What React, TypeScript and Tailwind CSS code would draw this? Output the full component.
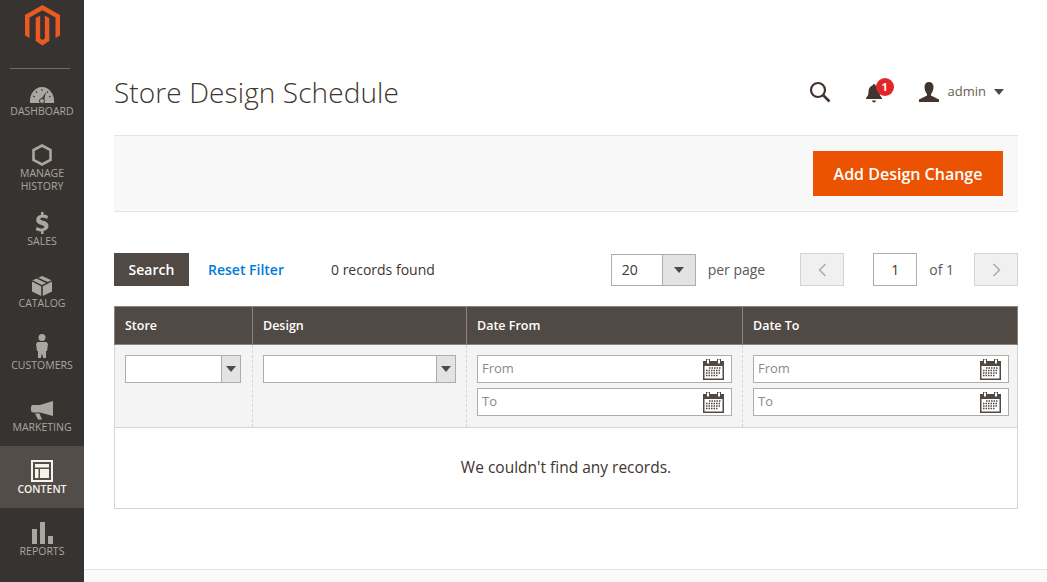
import type { ReactNode } from 'react'

const Gauge = () => (
  <svg width="26" height="18" viewBox="0 0 26 18" fill="none">
    <path d="M1 17 C0 8 6 1 13 1 C20 1 26 8 25 17 Z" fill="#aaa6a0" />
    <path d="M11 15 L17 6 L14.5 16 Z" fill="#373330" />
    <circle cx="13" cy="15" r="2.5" fill="#aaa6a0" stroke="#373330" />
    <path d="M13 3v2M7 5l1 2M19 5l-1 2M4 10l2 1M22 10l-2 1" stroke="#373330" />
  </svg>
)

const Hexagon = () => (
  <svg width="20" height="22" viewBox="0 0 20 22" fill="none">
    <path d="M10 1.5 L18.5 6 V16 L10 20.5 L1.5 16 V6 Z" stroke="#aaa6a0" strokeWidth="2.6" />
  </svg>
)

const Dollar = () => (
  <svg width="14" height="22" viewBox="0 0 14 22" fill="#aaa6a0">
    <path d="M6 0h2.5v2.6c1.8.2 3.4.7 4.6 1.4l-1 3c-1.400-.8-3-1.300-4.600-1.300-1.500 0-2.200.5-2.200 1.200 0 .8.900 1.200 3 1.900 3.300 1 5.200 2.300 5.200 5.100 0 2.600-1.800 4.500-5 5V22H6v-2.500c-2-.1-4-.7-5.300-1.500l1-3.100c1.500.9 3.300 1.500 5.100 1.500 1.500 0 2.500-.5 2.500-1.400 0-.8-.8-1.300-2.900-2C3.400 12 1.200 10.800 1.200 7.900c0-2.600 1.800-4.600 4.800-5.100z" />
  </svg>
)

const Box = () => (
  <svg width="20" height="20" viewBox="0 0 20 20" fill="#aaa6a0">
    <path d="M10 0 L19.500 4.200 L15.800 6.100 L6.400 1.700 Z" />
    <path d="M4.600 2.500 L14 6.900 L10 8.900 L0.500 4.200 Z" />
    <path d="M0 5.600 L9.200 10.200 V20 L0 15.500 Z" />
    <path d="M20 5.600 L10.800 10.200 V20 L20 15.500 Z" />
  </svg>
)

const Person = () => (
  <svg width="12" height="24" viewBox="0 0 12 24" fill="#aaa6a0">
    <circle cx="6" cy="3.500" r="3.500" />
    <path d="M1.500 8h9L12 10l-1 7h-1v7H7.200L6 19.500 4.800 24H2v-7H1L0 10z" />
  </svg>
)

const Megaphone = () => (
  <svg width="22" height="19" viewBox="0 0 22 19" fill="#aaa6a0">
    <path d="M22 0v15L9 11.500H2.500A2.500 2.500 0 0 1 0 9V6a2 2 0 0 1 2-2h7z" />
    <path d="M4 12.500h4.500l2.500 6H7z" />
  </svg>
)

const Layout = () => (
  <svg width="22" height="22" viewBox="0 0 22 22" fill="none">
    <rect x="1" y="1" width="20" height="20" stroke="#f7f3eb" strokeWidth="2" />
    <rect x="4" y="4" width="14" height="3.500" fill="#f7f3eb" />
    <rect x="4" y="9" width="3.500" height="9" fill="#f7f3eb" />
    <rect x="9" y="9" width="9" height="9" fill="#f7f3eb" />
  </svg>
)

const Bars = () => (
  <svg width="21" height="22" viewBox="0 0 21 22" fill="#aaa6a0">
    <rect x="0" y="7" width="5" height="15" />
    <rect x="8" y="0" width="5" height="22" />
    <rect x="16" y="14" width="5" height="8" />
  </svg>
)

const Logo = () => (
  <svg width="35" height="41" viewBox="0 0 35 41" fill="#eb5a24">
    <path d="M17.500 0 L35 10 V30.500 L30.500 33 V12.600 L17.500 5.200 L4.500 12.600 V33 L0 30.500 V10 Z" />
    <path d="M15.200 10.500 V33.500 L17.500 35 L19.800 33.500 V10.500 L24.300 13.100 V36 L17.500 40.500 L10.700 36 V13.100 Z" />
  </svg>
)

const Calendar = () => (
  <svg width="21" height="21" viewBox="0 0 21 21">
    <rect x="0" y="2" width="21" height="19" fill="#514943" />
    <rect x="1.500" y="7" width="18" height="12.500" fill="#fff" />
    <rect x="3.500" y="0" width="3" height="5" fill="#fff" stroke="#514943" />
    <rect x="14.500" y="0" width="3" height="5" fill="#fff" stroke="#514943" />
    <path d="M6 9h12M3 11.500h15M3 14h15M3 16.500h12" stroke="#514943" strokeWidth="1.500" strokeDasharray="1.500 1" />
  </svg>
)

const Caret = ({ className = '' }: { className?: string }) => (
  <span className={`inline-block w-0 h-0 border-x-[5px] border-x-transparent border-t-[6px] border-t-[#514943] ${className}`} />
)

function NavItem({ icon, label, active, tall }: { icon: ReactNode; label: ReactNode; active?: boolean; tall?: boolean }) {
  return (
    <div className={`flex flex-col items-center ${tall ? 'h-[68px]' : 'h-[62px]'} ${active ? 'bg-[#524d49] text-[#f7f3eb] font-semibold' : 'text-[#aaa6a0]'}`}>
      <div className="h-[36px] flex items-end justify-center shrink-0">{icon}</div>
      <div className="mt-[1px] text-[10.500px] leading-[13px] text-center">{label}</div>
    </div>
  )
}

function SelectBox({ className }: { className: string }) {
  return (
    <div className={`h-[28px] flex bg-white border border-[#adadad] ${className}`}>
      <div className="flex-1" />
      <div className="w-[19px] bg-[#e3e3e3] border-l border-[#adadad] flex items-center justify-center">
        <Caret className="border-x-[4px] border-t-[5px]" />
      </div>
    </div>
  )
}

function DateInput({ placeholder }: { placeholder: string }) {
  return (
    <div className="h-[28px] flex items-center justify-between bg-white border border-[#adadad] pl-[4px] pr-[7px] text-[13px] text-[#8a8a8a]">
      <span>{placeholder}</span>
      <Calendar />
    </div>
  )
}

export default function App() {
  return (
    <div className="flex w-[1047px] h-[582px] overflow-hidden bg-white font-['Open_Sans',sans-serif] text-[#41362f]">
      <aside className="w-[84px] shrink-0 bg-[#373330]">
        <div className="h-[68px] border-b-0 flex justify-center pt-[5px]">
          <Logo />
        </div>
        <div className="mx-[10px] w-[60px] h-px bg-[#736e69]" />
        <div className="-mt-px">
          <NavItem icon={<Gauge />} label="DASHBOARD" />
          <NavItem icon={<Hexagon />} label={<>MANAGE<br />HISTORY</>} tall />
          <NavItem icon={<Dollar />} label="SALES" />
          <NavItem icon={<Box />} label="CATALOG" />
          <NavItem icon={<Person />} label="CUSTOMERS" />
          <NavItem icon={<Megaphone />} label="MARKETING" />
          <NavItem icon={<Layout />} label="CONTENT" active />
          <NavItem icon={<Bars />} label="REPORTS" />
        </div>
      </aside>

      <main className="flex-1 flex flex-col min-w-0">
        <div className="flex-1 pl-[30px] pr-[29px]">
          <div className="h-[135px] flex items-center justify-between pt-[48px]">
            <h1 className="text-[28px] font-light leading-[36px] tracking-[0.1px]">Store Design Schedule</h1>
            <div className="flex items-center pr-[14px]">
              <svg width="22" height="22" viewBox="0 0 22 22" fill="none" stroke="#41362f" strokeWidth="2.200" className="mr-[34px]">
                <circle cx="9" cy="9" r="7" />
                <path d="M14 14l6.500 6.500" strokeWidth="2.600" />
              </svg>
              <div className="relative mr-[26px] w-[28px] h-[22px]">
                <svg width="18" height="19" viewBox="0 0 18 19" fill="#41362f" className="absolute left-0 top-[3px]">
                  <path d="M9 0a1.500 1.500 0 0 1 1.500 1.500C13.500 2.300 14.500 5 14.500 8c0 3 1 4.500 2.500 6v1H1v-1c1.500-1.500 2.500-3 2.500-6 0-3 1-5.700 4-6.500A1.500 1.500 0 0 1 9 0zM7 16.500h4a2 2 0 0 1-4 0z" />
                </svg>
                <span className="absolute left-[11px] top-[-3px] w-[18px] h-[18px] rounded-full bg-[#e22626] text-white text-[11px] font-bold leading-[18px] text-center">1</span>
              </div>
              <svg width="20" height="20" viewBox="0 0 20 20" fill="#41362f" className="mr-[9px]">
                <path d="M10 0c3 0 4.500 2 4.500 5s-1.500 6-2.500 7v1.500l8 4V20H0v-2.500l8-4V12c-1-1-2.500-4-2.500-7S7 0 10 0z" />
              </svg>
              <span className="text-[13px] text-[#676056] mr-[8px]">admin</span>
              <Caret className="border-x-[4.500px] border-t-[5px]" />
            </div>
          </div>

          <div className="h-[77px] bg-[#f8f8f8] border-y border-[#e3e3e3] flex items-center justify-end pr-[15px]">
            <button className="w-[190px] h-[45px] bg-[#eb5202] text-white text-[16px] font-semibold">Add Design Change</button>
          </div>

          <div className="mt-[41px] h-[33px] flex items-center text-[14px]">
            <button className="w-[75px] h-[33px] bg-[#514943] text-white font-semibold">Search</button>
            <span className="ml-[19px] text-[#007bdb] font-semibold text-[14px]">Reset Filter</span>
            <span className="ml-[47px] text-[#41362f]">0 records found</span>
            <div className="ml-auto flex items-center">
              <div className="w-[85px] h-[32px] flex border border-[#adadad] bg-white">
                <span className="flex-1 pl-[10px] leading-[30px]">20</span>
                <span className="w-[33px] bg-[#e3e3e3] border-l border-[#adadad] flex items-center justify-center">
                  <Caret className="border-x-[4px] border-t-[5px]" />
                </span>
              </div>
              <span className="ml-[12px] text-[#5e5751]">per page</span>
              <div className="ml-[35px] w-[44px] h-[33px] bg-[#f0f0f0] border border-[#d4d4d4] flex items-center justify-center">
                <svg width="9" height="14" viewBox="0 0 9 14" fill="none" stroke="#a8a8a8" strokeWidth="1.400"><path d="M7.500 1 L1.500 7 L7.500 13" /></svg>
              </div>
              <div className="ml-[29px] w-[44px] h-[33px] bg-white border border-[#adadad] flex items-center justify-center">1</div>
              <span className="ml-[12px] text-[#5e5751]">of 1</span>
              <div className="ml-[20px] w-[44px] h-[33px] bg-[#f0f0f0] border border-[#d4d4d4] flex items-center justify-center">
                <svg width="9" height="14" viewBox="0 0 9 14" fill="none" stroke="#a8a8a8" strokeWidth="1.400"><path d="M1.500 1 L7.500 7 L1.500 13" /></svg>
              </div>
            </div>
          </div>

          <div className="mt-[20px]">
            <div className="grid grid-cols-[137px_214px_276px_277px] h-[39px] bg-[#514943] border border-[#8a837f] text-white text-[12.500px] font-semibold leading-[37px]">
              <div className="pl-[10px]">Store</div>
              <div className="pl-[10px] border-l border-[#8a837f]">Design</div>
              <div className="pl-[10px] border-l border-[#8a837f]">Date From</div>
              <div className="pl-[10px] border-l border-[#8a837f]">Date To</div>
            </div>
            <div className="grid grid-cols-[137px_214px_276px_277px] h-[82px] bg-[#f4f4f4] border-x border-[#d6d6d6]">
              <div className="pl-[10px] pt-[10px]">
                <SelectBox className="w-[116px]" />
              </div>
              <div className="pl-[10px] pt-[10px] border-l border-dashed border-[#d6d6d6]">
                <SelectBox className="w-[193px]" />
              </div>
              <div className="pl-[10px] pt-[10px] pr-[10px] border-l border-dashed border-[#d6d6d6] flex flex-col gap-[5px]">
                <DateInput placeholder="From" />
                <DateInput placeholder="To" />
              </div>
              <div className="pl-[10px] pt-[10px] pr-[10px] border-l border-dashed border-[#d6d6d6] flex flex-col gap-[5px]">
                <DateInput placeholder="From" />
                <DateInput placeholder="To" />
              </div>
            </div>
            <div className="h-[82px] border border-[#d6d6d6] flex items-center justify-center text-[15.500px] text-[#41362f]">
              We couldn't find any records.
            </div>
          </div>
        </div>
        <div className="h-[13px] border-t border-[#e3e3e3] bg-[#fafafa]" />
      </main>
    </div>
  )
}
